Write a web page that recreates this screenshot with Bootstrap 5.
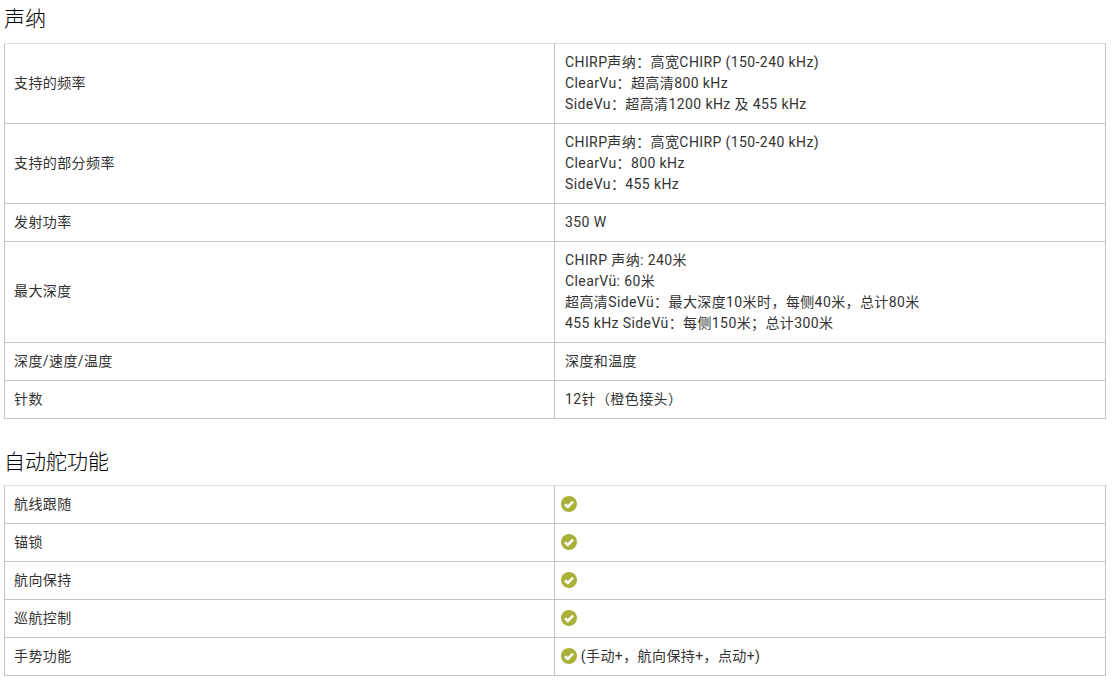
<!DOCTYPE html>
<html lang="zh">
<head>
<meta charset="utf-8">
<title>声纳</title>
<link href="https://cdn.jsdelivr.net/npm/bootstrap@5.3.0/dist/css/bootstrap.min.css" rel="stylesheet">
<style>
body { font-family: Roboto, "Noto Sans CJK SC", sans-serif; font-size: 14px; line-height: 21px; color: #333; background: #fff; padding: 0 12px 0 4px; overflow: hidden; }
.spec-title { font-family: Roboto, "Noto Sans CJK SC", sans-serif; font-size: 21px; line-height: 30px; font-weight: 300; color: #000; margin: 4px 0 9px 0; }
.spec-title.later { margin: 28px 0 8px 0; }
.spec-table { width: 1102px; table-layout: fixed; border-collapse: collapse; margin: 0; }
.spec-table td { border: 1px solid #c4c4c4; padding: 8px 10px; vertical-align: middle; letter-spacing: .4px; }
.spec-table tr:first-child td { border-top-color: #e0e0e0; }
.spec-table td:first-child { width: 550px; padding-left: 9px; }
.spec-table td.lift { padding-bottom: 10px; }
.tick { width: 16px; height: 16px; display: inline-block; vertical-align: -3px; margin-left: -4px; }
</style>
</head>
<body>
<h2 class="spec-title">声纳</h2>
<table class="spec-table">
<tr><td>支持的频率</td><td>CHIRP声纳：高宽CHIRP (150-240 kHz)<br>ClearVu：超高清800 kHz<br>SideVu：超高清1200 kHz 及 455 kHz</td></tr>
<tr><td>支持的部分频率</td><td>CHIRP声纳：高宽CHIRP (150-240 kHz)<br>ClearVu：800 kHz<br>SideVu：455 kHz</td></tr>
<tr><td>发射功率</td><td>350 W</td></tr>
<tr><td class="lift">最大深度</td><td>CHIRP 声纳: 240米<br>ClearVü: 60米<br>超高清SideVü：最大深度10米时，每侧40米，总计80米<br>455 kHz SideVü：每侧150米；总计300米</td></tr>
<tr><td>深度/速度/温度</td><td>深度和温度</td></tr>
<tr><td>针数</td><td>12针（橙色接头）</td></tr>
</table>
<h2 class="spec-title later">自动舵功能</h2>
<table class="spec-table">
<tr><td>航线跟随</td><td><svg class="tick" viewBox="0 0 16 16"><circle cx="8" cy="8" r="8" fill="#a9b037"/><path d="M4 8.2 6.9 11l5.1-5.4" fill="none" stroke="#fff" stroke-width="2.6"/></svg></td></tr>
<tr><td>锚锁</td><td><svg class="tick" viewBox="0 0 16 16"><circle cx="8" cy="8" r="8" fill="#a9b037"/><path d="M4 8.2 6.9 11l5.1-5.4" fill="none" stroke="#fff" stroke-width="2.6"/></svg></td></tr>
<tr><td>航向保持</td><td><svg class="tick" viewBox="0 0 16 16"><circle cx="8" cy="8" r="8" fill="#a9b037"/><path d="M4 8.2 6.9 11l5.1-5.4" fill="none" stroke="#fff" stroke-width="2.6"/></svg></td></tr>
<tr><td>巡航控制</td><td><svg class="tick" viewBox="0 0 16 16"><circle cx="8" cy="8" r="8" fill="#a9b037"/><path d="M4 8.2 6.9 11l5.1-5.4" fill="none" stroke="#fff" stroke-width="2.6"/></svg></td></tr>
<tr><td>手势功能</td><td><svg class="tick" viewBox="0 0 16 16"><circle cx="8" cy="8" r="8" fill="#a9b037"/><path d="M4 8.2 6.9 11l5.1-5.4" fill="none" stroke="#fff" stroke-width="2.6"/></svg> (手动+，航向保持+，点动+)</td></tr>
</table>
<script src="https://cdn.jsdelivr.net/npm/bootstrap@5.3.0/dist/js/bootstrap.bundle.min.js"></script>
</body>
</html>
